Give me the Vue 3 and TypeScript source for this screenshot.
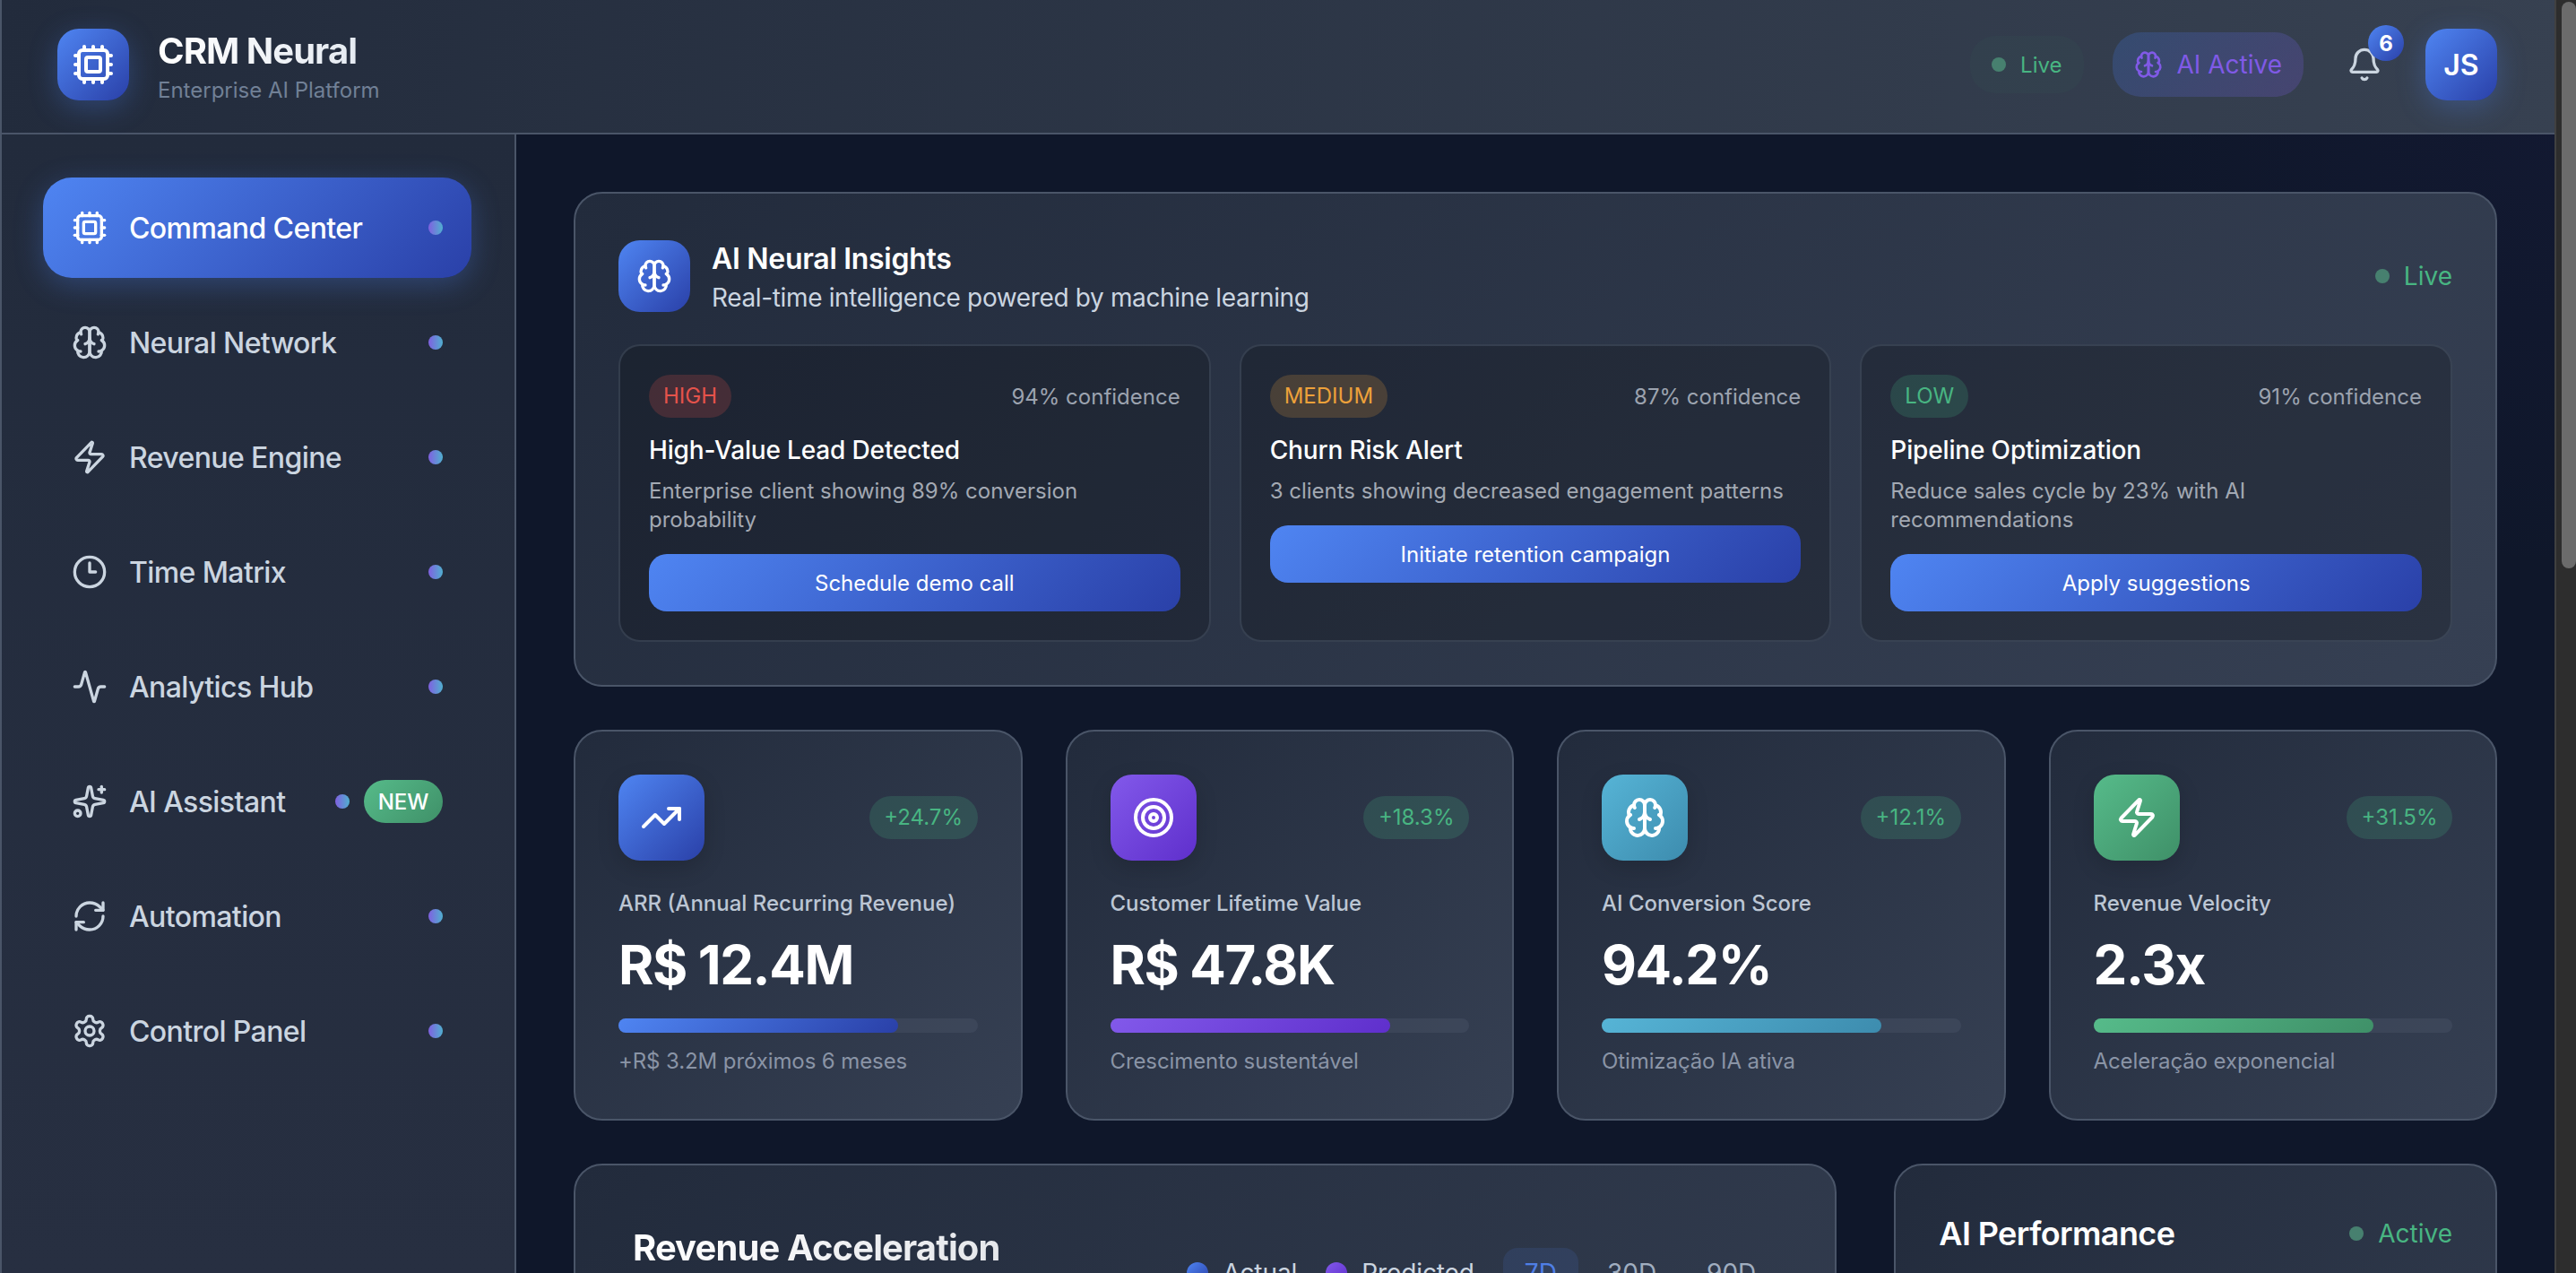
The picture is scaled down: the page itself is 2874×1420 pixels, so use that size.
<script setup lang="ts">
import { h } from 'vue'

const circle = (cx: number, cy: number, r: number) =>
  `M${cx + r} ${cy}a${r} ${r} 0 1 1-${r * 2} 0 ${r} ${r} 0 1 1 ${r * 2} 0`

const icons: Record<string, string[]> = {
  cpu: [
    'M6 4h12a2 2 0 0 1 2 2v12a2 2 0 0 1-2 2H6a2 2 0 0 1-2-2V6a2 2 0 0 1 2-2z',
    'M9 8h6a1 1 0 0 1 1 1v6a1 1 0 0 1-1 1H9a1 1 0 0 1-1-1V9a1 1 0 0 1 1-1z',
    'M12 20v2', 'M12 2v2', 'M17 20v2', 'M17 2v2', 'M2 12h2', 'M2 17h2', 'M2 7h2',
    'M20 12h2', 'M20 17h2', 'M20 7h2', 'M7 20v2', 'M7 2v2'
  ],
  brain: [
    'M12 5a3 3 0 1 0-5.997.125 4 4 0 0 0-2.526 5.77 4 4 0 0 0 .556 6.588A4 4 0 1 0 12 18Z',
    'M12 5a3 3 0 1 1 5.997.125 4 4 0 0 1 2.526 5.77 4 4 0 0 1-.556 6.588A4 4 0 1 1 12 18Z',
    'M15 13a4.5 4.5 0 0 1-3-4 4.5 4.5 0 0 1-3 4',
    'M17.599 6.5a3 3 0 0 0 .399-1.375',
    'M6.003 5.125A3 3 0 0 0 6.401 6.5',
    'M3.477 10.896a4 4 0 0 1 .585-.396',
    'M19.938 10.5a4 4 0 0 1 .585.396',
    'M6 18a4 4 0 0 1-1.967-.516',
    'M19.967 17.484A4 4 0 0 1 18 18'
  ],
  zap: [
    'M4 14a1 1 0 0 1-.78-1.63l9.9-10.2a.5.5 0 0 1 .86.46l-1.92 6.02A1 1 0 0 0 13 10h7a1 1 0 0 1 .78 1.63l-9.9 10.2a.5.5 0 0 1-.86-.46l1.92-6.02A1 1 0 0 0 11 14z'
  ],
  clock: [circle(12, 12, 10), 'M12 6v6h4'],
  activity: [
    'M22 12h-2.48a2 2 0 0 0-1.93 1.46l-2.35 8.36a.25.25 0 0 1-.48 0L9.24 2.18a.25.25 0 0 0-.48 0l-2.35 8.36A2 2 0 0 1 4.49 12H2'
  ],
  sparkles: [
    'M11.017 2.814a1 1 0 0 1 1.966 0l1.051 5.558a2 2 0 0 0 1.594 1.594l5.558 1.051a1 1 0 0 1 0 1.966l-5.558 1.051a2 2 0 0 0-1.594 1.594l-1.051 5.558a1 1 0 0 1-1.966 0l-1.051-5.558a2 2 0 0 0-1.594-1.594l-5.558-1.051a1 1 0 0 1 0-1.966l5.558-1.051a2 2 0 0 0 1.594-1.594z',
    'M20 2v4', 'M22 4h-4', circle(4, 20, 2)
  ],
  refresh: [
    'M3 12a9 9 0 0 1 9-9 9.75 9.75 0 0 1 6.74 2.74L21 8', 'M21 3v5h-5',
    'M21 12a9 9 0 0 1-9 9 9.75 9.75 0 0 1-6.74-2.74L3 16', 'M8 16H3v5'
  ],
  settings: [
    'M12.22 2h-.44a2 2 0 0 0-2 2v.18a2 2 0 0 1-1 1.73l-.43.25a2 2 0 0 1-2 0l-.15-.08a2 2 0 0 0-2.73.73l-.22.38a2 2 0 0 0 .73 2.73l.15.1a2 2 0 0 1 1 1.72v.51a2 2 0 0 1-1 1.74l-.15.09a2 2 0 0 0-.73 2.73l.22.38a2 2 0 0 0 2.73.73l.15-.08a2 2 0 0 1 2 0l.43.25a2 2 0 0 1 1 1.73V20a2 2 0 0 0 2 2h.44a2 2 0 0 0 2-2v-.18a2 2 0 0 1 1-1.73l.43-.25a2 2 0 0 1 2 0l.15.08a2 2 0 0 0 2.73-.73l.22-.39a2 2 0 0 0-.73-2.73l-.15-.08a2 2 0 0 1-1-1.74v-.5a2 2 0 0 1 1-1.74l.15-.09a2 2 0 0 0 .73-2.73l-.22-.38a2 2 0 0 0-2.73-.73l-.15.08a2 2 0 0 1-2 0l-.43-.25a2 2 0 0 1-1-1.73V4a2 2 0 0 0-2-2z',
    circle(12, 12, 3)
  ],
  bell: [
    'M10.268 21a2 2 0 0 0 3.464 0',
    'M3.262 15.326A1 1 0 0 0 4 17h16a1 1 0 0 0 .74-1.673C19.41 13.956 18 12.499 18 8A6 6 0 0 0 6 8c0 4.499-1.411 5.956-2.738 7.326'
  ],
  trending: ['M22 7 13.5 15.5 8.5 10.5 2 17', 'M16 7h6v6'],
  target: [circle(12, 12, 10), circle(12, 12, 6), circle(12, 12, 2)]
}

const Icon = (props: { name: string }) =>
  h(
    'svg',
    {
      viewBox: '0 0 24 24',
      fill: 'none',
      stroke: 'currentColor',
      'stroke-width': 2,
      'stroke-linecap': 'round',
      'stroke-linejoin': 'round'
    },
    icons[props.name].map((d) => h('path', { d }))
  )
Icon.props = ['name']

const navItems = [
  { label: 'Command Center', icon: 'cpu', active: true },
  { label: 'Neural Network', icon: 'brain' },
  { label: 'Revenue Engine', icon: 'zap' },
  { label: 'Time Matrix', icon: 'clock' },
  { label: 'Analytics Hub', icon: 'activity' },
  { label: 'AI Assistant', icon: 'sparkles', badge: 'NEW' },
  { label: 'Automation', icon: 'refresh' },
  { label: 'Control Panel', icon: 'settings' }
]

const insights = [
  {
    level: 'HIGH',
    tone: 'high',
    confidence: '94% confidence',
    title: 'High-Value Lead Detected',
    text: 'Enterprise client showing 89% conversion probability',
    action: 'Schedule demo call'
  },
  {
    level: 'MEDIUM',
    tone: 'medium',
    confidence: '87% confidence',
    title: 'Churn Risk Alert',
    text: '3 clients showing decreased engagement patterns',
    action: 'Initiate retention campaign'
  },
  {
    level: 'LOW',
    tone: 'low',
    confidence: '91% confidence',
    title: 'Pipeline Optimization',
    text: 'Reduce sales cycle by 23% with AI recommendations',
    action: 'Apply suggestions'
  }
]

const kpis = [
  { icon: 'trending', tone: 'blue', delta: '+24.7%', label: 'ARR (Annual Recurring Revenue)', value: 'R$ 12.4M', fill: 78, note: '+R$ 3.2M próximos 6 meses' },
  { icon: 'target', tone: 'purple', delta: '+18.3%', label: 'Customer Lifetime Value', value: 'R$ 47.8K', fill: 78, note: 'Crescimento sustentável' },
  { icon: 'brain', tone: 'cyan', delta: '+12.1%', label: 'AI Conversion Score', value: '94.2%', fill: 78, note: 'Otimização IA ativa' },
  { icon: 'zap', tone: 'green', delta: '+31.5%', label: 'Revenue Velocity', value: '2.3x', fill: 78, note: 'Aceleração exponencial' }
]
</script>

<template>
  <div class="app">
    <div class="page">
      <header class="topbar">
        <div class="brand">
          <div class="brand-icon"><Icon name="cpu" class="i48" /></div>
          <div>
            <div class="brand-title">CRM Neural</div>
            <div class="brand-sub">Enterprise AI Platform</div>
          </div>
        </div>
        <div class="top-actions">
          <div class="pill-live"><span class="dot"></span>Live</div>
          <div class="pill-ai"><Icon name="brain" class="i32" />AI Active</div>
          <div class="bell">
            <Icon name="bell" class="i40" />
            <span class="bell-count">6</span>
          </div>
          <div class="avatar">JS</div>
        </div>
      </header>

      <div class="body">
        <aside class="sidebar">
          <nav class="nav">
            <div v-for="item in navItems" :key="item.label" class="nav-item" :class="{ active: item.active }">
              <Icon :name="item.icon" class="i40" />
              <span class="nav-label">{{ item.label }}</span>
              <span class="nav-dot"></span>
              <span v-if="item.badge" class="nav-badge">{{ item.badge }}</span>
            </div>
          </nav>
        </aside>

        <main class="main">
          <section class="card insights">
            <div class="insights-head">
              <div class="insights-icon"><Icon name="brain" class="i40" /></div>
              <div class="insights-titles">
                <h2>AI Neural Insights</h2>
                <p>Real-time intelligence powered by machine learning</p>
              </div>
              <div class="status"><span class="dot"></span>Live</div>
            </div>
            <div class="insights-grid">
              <article v-for="ins in insights" :key="ins.title" class="insight">
                <div class="insight-top">
                  <span class="level" :class="ins.tone">{{ ins.level }}</span>
                  <span class="confidence">{{ ins.confidence }}</span>
                </div>
                <h3>{{ ins.title }}</h3>
                <p>{{ ins.text }}</p>
                <button class="action">{{ ins.action }}</button>
              </article>
            </div>
          </section>

          <section class="kpi-grid">
            <article v-for="kpi in kpis" :key="kpi.label" class="card kpi">
              <div class="kpi-top">
                <div class="kpi-icon" :class="kpi.tone"><Icon :name="kpi.icon" class="i48" /></div>
                <span class="delta">{{ kpi.delta }}</span>
              </div>
              <div class="kpi-label">{{ kpi.label }}</div>
              <div class="kpi-value">{{ kpi.value }}</div>
              <div class="bar"><div class="bar-fill" :class="kpi.tone" :style="{ width: kpi.fill + '%' }"></div></div>
              <div class="kpi-note">{{ kpi.note }}</div>
            </article>
          </section>

          <section class="lower-grid">
            <div class="card revenue">
              <div class="revenue-head">
                <h2>Revenue Acceleration</h2>
                <div class="revenue-tools">
                  <span class="legend"><i class="legend-dot blue"></i>Actual</span>
                  <span class="legend"><i class="legend-dot purple"></i>Predicted</span>
                  <div class="ranges">
                    <span class="range on">7D</span>
                    <span class="range">30D</span>
                    <span class="range">90D</span>
                  </div>
                </div>
              </div>
            </div>
            <div class="card performance">
              <div class="performance-head">
                <h2>AI Performance</h2>
                <div class="status"><span class="dot"></span>Active</div>
              </div>
            </div>
          </section>
        </main>
      </div>
    </div>

    <div class="scrollbar"><div class="thumb"></div></div>
    <div class="edge"></div>
  </div>
</template>

<style>
html,
body {
  margin: 0;
  background: #0f172a;
}
</style>

<style scoped>
.app {
  position: relative;
  display: flex;
  height: 100vh;
  overflow: hidden;
  font-family: Inter, "Liberation Sans", sans-serif;
  color: #fff;
}

.edge {
  position: absolute;
  left: 0;
  top: 0;
  bottom: 0;
  width: 2px;
  background: #4a5568;
}

.scrollbar {
  width: 22px;
  flex: none;
  border-left: 2px solid #404040;
  background: #2d2d2d;
  padding-top: 2px;
}

.thumb {
  height: 632px;
  width: 16px;
  margin-left: 6px;
  border-radius: 8px;
  background: #6b6b6b;
}

.page {
  flex: 1;
  min-width: 0;
  display: flex;
  flex-direction: column;
}

.i32 { width: 32px; height: 32px; flex: none; }
.i40 { width: 40px; height: 40px; flex: none; }
.i48 { width: 48px; height: 48px; flex: none; }

/* top bar */
.topbar {
  display: flex;
  align-items: center;
  justify-content: space-between;
  height: 88px;
  padding: 28px 64px 32px;
  border-bottom: 2px solid #4a5568;
  background: linear-gradient(100deg, #222b3c, #374151);
}

.brand {
  display: flex;
  align-items: center;
  gap: 32px;
}

.brand-icon {
  width: 80px;
  height: 80px;
  border-radius: 24px;
  display: flex;
  align-items: center;
  justify-content: center;
  background: linear-gradient(135deg, #4f85f2, #2a40a8);
  box-shadow: 0 8px 32px rgba(79, 133, 242, 0.3);
}

.brand-title {
  padding-top: 2px;
  font-size: 40px;
  line-height: 56px;
  font-weight: 700;
  letter-spacing: -0.96px;
  background: linear-gradient(90deg, #fff, #e2e8f0);
  -webkit-background-clip: text;
  background-clip: text;
  color: transparent;
}

.brand-sub {
  font-size: 24px;
  line-height: 32px;
  color: #718096;
}

.top-actions {
  display: flex;
  align-items: center;
  gap: 32px;
}

.pill-live {
  display: flex;
  align-items: center;
  gap: 16px;
  height: 64px;
  padding: 0 24px;
  border-radius: 28px;
  background: rgba(72, 187, 120, 0.03);
  font-size: 24px;
  color: #48b582;
}

.dot {
  width: 16px;
  height: 16px;
  border-radius: 50%;
  background: #47806f;
}

.pill-ai {
  display: flex;
  align-items: center;
  gap: 16px;
  height: 72px;
  padding: 0 24px;
  border-radius: 32px;
  background: linear-gradient(135deg, rgba(59, 130, 246, 0.2), rgba(139, 92, 246, 0.2));
  font-size: 28px;
  font-weight: 400;
  color: #805ae6;
}

.bell {
  position: relative;
  display: flex;
  padding: 16px;
  color: #cbd5e0;
}

.bell-count {
  position: absolute;
  top: -8px;
  right: -8px;
  width: 40px;
  height: 40px;
  border-radius: 50%;
  display: flex;
  align-items: center;
  justify-content: center;
  background: linear-gradient(135deg, #4f85f2, #2a40a8);
  color: #fff;
  font-size: 24px;
  font-weight: 700;
}

.avatar {
  width: 80px;
  height: 80px;
  border-radius: 24px;
  display: flex;
  align-items: center;
  justify-content: center;
  background: linear-gradient(135deg, #4f85f2, #2a40a8);
  box-shadow: 0 8px 32px rgba(79, 133, 242, 0.3);
  font-size: 32px;
  font-weight: 600;
}

/* sidebar */
.body {
  flex: 1;
  min-height: 0;
  display: flex;
}

.sidebar {
  width: 478px;
  flex: none;
  padding: 48px;
  border-right: 2px solid #4a5568;
  background: linear-gradient(180deg, #222b3c, #272f41);
}

.nav {
  display: flex;
  flex-direction: column;
  gap: 16px;
}

.nav-item {
  display: flex;
  align-items: center;
  height: 112px;
  padding: 0 32px;
  border-radius: 32px;
  color: #cbd5e0;
  font-size: 32px;
  font-weight: 500;
  letter-spacing: -0.6px;
}

.nav-item.active {
  color: #fff;
  background: linear-gradient(135deg, #4f85f2, #2a40a8);
  box-shadow: 0 8px 32px rgba(79, 133, 242, 0.3);
}

.nav-label {
  flex: 1;
  margin-left: 24px;
}

.nav-dot {
  width: 16px;
  height: 16px;
  border-radius: 50%;
  background: linear-gradient(90deg, #8060e0, #50b0d0);
}

.nav-badge {
  margin-left: 16px;
  height: 48px;
  width: 88px;
  border-radius: 24px;
  display: flex;
  align-items: center;
  justify-content: center;
  background: linear-gradient(135deg, #56bb8a, #3f9068);
  color: #fff;
  font-size: 24px;
  font-weight: 500;
  letter-spacing: 0;
}

/* main */
.main {
  flex: 1;
  min-width: 0;
  padding: 64px;
  overflow: hidden;
  background:
    radial-gradient(circle at 100% 0, rgba(100, 70, 220, 0.04), transparent 500px),
    #0f172a;
}

.card {
  border: 2px solid #4a5568;
  border-radius: 32px;
  background: linear-gradient(135deg, #222b3c, #364053);
}

.insights {
  padding: 48px;
}

.insights-head {
  display: flex;
  align-items: center;
  gap: 24px;
}

.insights-icon {
  width: 80px;
  height: 80px;
  border-radius: 24px;
  display: flex;
  align-items: center;
  justify-content: center;
  background: linear-gradient(135deg, #4f85f2, #2a40a8);
}

.insights-titles {
  flex: 1;
}

.insights-titles h2 {
  margin: 0 0 -2px;
  font-size: 32px;
  line-height: 50px;
  font-weight: 600;
  letter-spacing: -0.3px;
}

.insights-titles p {
  margin: 0;
  font-size: 28px;
  line-height: 40px;
  letter-spacing: -0.36px;
  color: #cbd5e0;
}

.status {
  display: flex;
  align-items: center;
  gap: 16px;
  font-size: 28px;
  color: #48b582;
}

.insights-grid {
  display: grid;
  grid-template-columns: repeat(3, 1fr);
  gap: 32px;
  margin-top: 32px;
}

.insight {
  display: flex;
  flex-direction: column;
  align-items: stretch;
  padding: 32px;
  border: 2px solid rgba(74, 85, 104, 0.5);
  border-radius: 24px;
  background: rgba(0, 0, 0, 0.2);
}

.insight-top {
  display: flex;
  align-items: center;
  justify-content: space-between;
}

.level {
  padding: 8px 16px;
  border-radius: 24px;
  font-size: 24px;
  line-height: 32px;
  font-weight: 400;
}

.level.high {
  color: #e5534b;
  background: rgba(229, 83, 75, 0.2);
}

.level.medium {
  color: #eda13a;
  background: rgba(237, 161, 58, 0.2);
}

.level.low {
  color: #48b582;
  background: rgba(72, 181, 130, 0.2);
}

.confidence {
  font-size: 24px;
  color: #9ca3af;
}

.insight h3 {
  margin: 16px 0 8px;
  font-size: 28px;
  line-height: 40px;
  font-weight: 500;
  letter-spacing: -0.15px;
}

.insight p {
  margin: 0;
  padding-top: 2px;
  font-size: 24px;
  line-height: 32px;
  color: #a3a9b3;
}

.action {
  margin-top: 22px;
  height: 64px;
  border: 0;
  border-radius: 20px;
  background: linear-gradient(135deg, #4f85f2, #2a40a8);
  color: #fff;
  font-family: inherit;
  font-size: 24px;
  font-weight: 400;
}

/* kpi cards */
.kpi-grid {
  display: grid;
  grid-template-columns: repeat(4, 1fr);
  gap: 48px;
  margin-top: 48px;
}

.kpi {
  padding: 48px;
}

.kpi-top {
  display: flex;
  align-items: center;
  justify-content: space-between;
}

.kpi-icon {
  width: 96px;
  height: 96px;
  border-radius: 24px;
  display: flex;
  align-items: center;
  justify-content: center;
  box-shadow: 0 8px 24px rgba(0, 0, 0, 0.15);
}

.blue { background: linear-gradient(135deg, #4f85f2, #2a40a8); }
.purple { background: linear-gradient(135deg, #8259ea, #5f2fcc); }
.cyan { background: linear-gradient(135deg, #56b4d6, #3d8cae); }
.green { background: linear-gradient(135deg, #56bb8a, #3f9068); }

.delta {
  padding: 8px 16.5px;
  border-radius: 24px;
  font-size: 24px;
  line-height: 32px;
  font-weight: 400;
  color: #48b582;
  background: rgba(72, 181, 130, 0.2);
}

.kpi-label {
  margin-top: 32px;
  font-size: 24px;
  line-height: 32px;
  font-weight: 500;
  color: #bcc6d4;
}

.kpi-value {
  margin-top: 16px;
  font-size: 60px;
  line-height: 72px;
  font-weight: 700;
  letter-spacing: -1.4px;
}

.bar {
  height: 16px;
  margin-top: 24px;
  border-radius: 8px;
  background: rgba(74, 85, 104, 0.4);
}

.bar-fill {
  height: 100%;
  border-radius: 8px;
}

.kpi-note {
  margin-top: 16px;
  font-size: 24px;
  line-height: 32px;
  letter-spacing: -0.1px;
  color: #8a94a6;
}

/* lower row */
.lower-grid {
  display: grid;
  grid-template-columns: repeat(3, 1fr);
  gap: 64px;
  margin-top: 48px;
}

.revenue {
  grid-column: span 2;
  padding: 64px;
  height: 600px;
}

.revenue-head {
  display: flex;
  align-items: center;
  justify-content: space-between;
  min-height: 112px;
}

.revenue-head h2 {
  align-self: flex-start;
  margin: 0;
  font-size: 40px;
  line-height: 56px;
  font-weight: 700;
  letter-spacing: -0.9px;
  background: linear-gradient(90deg, #fff, #e5e7eb);
  -webkit-background-clip: text;
  background-clip: text;
  color: transparent;
}

.revenue-tools {
  display: flex;
  align-items: center;
  gap: 32px;
}

.legend {
  display: flex;
  align-items: center;
  gap: 16px;
  font-size: 28px;
  line-height: 40px;
  letter-spacing: -0.1px;
  color: #cbd5e0;
}

.legend-dot {
  width: 24px;
  height: 24px;
  border-radius: 50%;
}

.ranges {
  display: flex;
  gap: 8px;
}

.range {
  padding: 8px 24px;
  border-radius: 16px;
  font-size: 28px;
  line-height: 40px;
  color: #a0aec0;
}

.range.on {
  background: rgba(79, 133, 242, 0.12);
  color: #4f7fe6;
}

.performance {
  padding: 48px;
  height: 600px;
}

.performance-head {
  display: flex;
  align-items: center;
  justify-content: space-between;
}

.performance-head h2 {
  margin: 0;
  font-size: 36px;
  line-height: 56px;
  font-weight: 600;
  letter-spacing: -0.6px;
}
</style>
